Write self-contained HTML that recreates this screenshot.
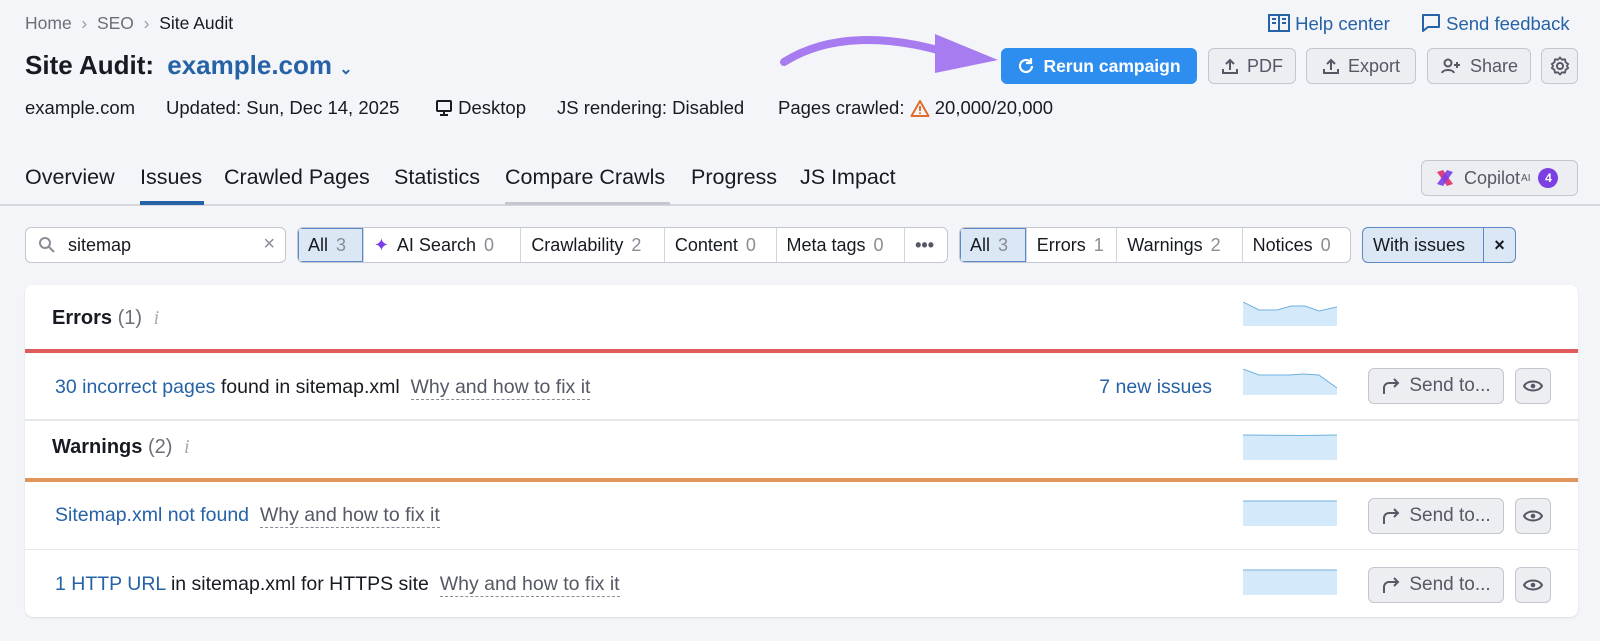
<!DOCTYPE html>
<html><head><meta charset="utf-8"><style>
*{box-sizing:border-box;margin:0;padding:0}
body{width:1600px;height:641px;background:#f4f5f9;font-family:"Liberation Sans",sans-serif;color:#171a22;position:relative;overflow:hidden;font-size:17px}
.a{position:absolute;white-space:nowrap}
.g{color:#6c6e79}
.blue{color:#2662a6}
.btn{position:absolute;border:1px solid #c4c7cf;background:#edeef2;border-radius:6px;color:#555865;display:flex;align-items:center;justify-content:center;gap:8px;font-size:18px}
.seg{position:absolute;top:227px;height:36px;display:flex;border:1px solid #c4c7cf;border-radius:6px;background:#fff;overflow:hidden}
.seg div{display:flex;align-items:center;padding:0 10px;border-left:1px solid #d3d5dc;font-size:18px;gap:8px;height:100%}
.seg div:first-child{border-left:none}
.seg .on{background:#dbe7f5;box-shadow:inset 0 0 0 1px #5b8ac4}
.n{color:#8a8c96}
.tab{position:absolute;top:165px;font-size:21.5px}
.m{position:absolute;top:97px;font-size:18.5px;white-space:nowrap}
.card{position:absolute;left:25px;top:285px;width:1553px;height:332px;background:#fff;border-radius:8px;box-shadow:0 1px 2px rgba(0,0,0,.1)}
.why{color:#555865;border-bottom:1.5px dashed #8a8c96;padding-bottom:1px}
.row{font-size:19.5px}
.sp{position:absolute;left:1218px;width:94px}
</style></head><body>
<div class="a g" style="left:25px;top:13px;font-size:17.5px">Home &nbsp;<span style="color:#9a9ca5">›</span>&nbsp; SEO &nbsp;<span style="color:#9a9ca5">›</span>&nbsp; <span style="color:#171a22">Site Audit</span></div>
<div class="a" style="left:25px;top:50px;font-size:26px;font-weight:bold">Site Audit: <span class="blue" style="margin-left:6px">example.com</span> <span class="blue" style="font-size:16px">⌄</span></div>
<div class="m" style="left:25px">example.com</div>
<div class="m" style="left:166px">Updated: Sun, Dec 14, 2025</div>
<div class="m" style="left:435px"><svg width="18" height="16" viewBox="0 0 18 16" style="vertical-align:-2px"><rect x="2" y="1" width="14" height="10" rx="1" fill="none" stroke="#171a22" stroke-width="2"/><path d="M9 11v3M5 15h8" stroke="#171a22" stroke-width="2"/></svg> Desktop</div>
<div class="m" style="left:557px">JS rendering: Disabled</div>
<div class="m" style="left:778px">Pages crawled: <svg width="20" height="18" viewBox="0 0 20 18" style="vertical-align:-3px"><path d="M10 2L18.5 17H1.5Z" fill="none" stroke="#e06d2c" stroke-width="2" stroke-linejoin="round"/><path d="M10 7v5M10 13.5v1.5" stroke="#e06d2c" stroke-width="2"/></svg> 20,000/20,000</div>
<div class="a blue" style="left:1268px;top:13px;font-size:18.5px"><svg width="22" height="20" viewBox="0 0 22 20" style="vertical-align:-3px"><rect x="1" y="2" width="20" height="16" fill="none" stroke="#2662a6" stroke-width="2"/><path d="M11 2v16M4 6h4M4 10h4M14 6h4M14 10h4" stroke="#2662a6" stroke-width="2"/></svg> Help center</div>
<div class="a blue" style="left:1421px;top:13px;font-size:18.5px"><svg width="20" height="20" viewBox="0 0 20 20" style="vertical-align:-3px"><path d="M2 2h16v12H7l-5 4Z" fill="none" stroke="#2662a6" stroke-width="2" stroke-linejoin="round"/></svg> Send feedback</div>
<svg class="a" style="left:770px;top:28px" width="240" height="52" viewBox="0 0 240 52"><path d="M14 34 C60 5 120 8 175 24" fill="none" stroke="#a77cf0" stroke-width="8" stroke-linecap="round"/><path d="M165 6 L228 32 L165 45 Z" fill="#a77cf0"/></svg>
<div class="btn" style="left:1001px;top:48px;width:196px;height:36px;background:#2d8ef0;border-color:#2d8ef0;color:#fff;font-weight:bold;font-size:17.5px"><svg width="18" height="18" viewBox="0 0 18 18"><path d="M15 9a6 6 0 1 1-2-4.5" fill="none" stroke="#fff" stroke-width="2.2"/><path d="M14 1v5h-5" fill="none" stroke="#fff" stroke-width="2.2"/></svg>Rerun campaign</div>
<div class="btn" style="left:1208px;top:48px;width:88px;height:36px"><svg width="18" height="18" viewBox="0 0 18 18"><path d="M9 13V3M5 7l4-4 4 4M2 12v4h14v-4" fill="none" stroke="#555865" stroke-width="2"/></svg>PDF</div>
<div class="btn" style="left:1306px;top:48px;width:110px;height:36px"><svg width="18" height="18" viewBox="0 0 18 18"><path d="M9 13V3M5 7l4-4 4 4M2 12v4h14v-4" fill="none" stroke="#555865" stroke-width="2"/></svg>Export</div>
<div class="btn" style="left:1427px;top:48px;width:104px;height:36px"><svg width="22" height="18" viewBox="0 0 22 18"><circle cx="8" cy="6" r="3.5" fill="none" stroke="#555865" stroke-width="2"/><path d="M2 16c1-4 11-4 12 0M17 5v6M14 8h6" fill="none" stroke="#555865" stroke-width="2"/></svg>Share</div>
<div class="btn" style="left:1541px;top:48px;width:37px;height:36px"><svg width="20" height="20" viewBox="0 0 20 20"><circle cx="10" cy="10" r="3" fill="none" stroke="#555865" stroke-width="2"/><path d="M10 1.5l2 2.2 3-.4.6 3 2.6 1.7-1.4 2 1.4 2-2.6 1.7-.6 3-3-.4-2 2.2-2-2.2-3 .4-.6-3L1.8 12l1.4-2-1.4-2 2.6-1.7.6-3 3 .4Z" fill="none" stroke="#555865" stroke-width="1.8" stroke-linejoin="round"/></svg></div>
<div class="tab" style="left:25px">Overview</div>
<div class="tab" style="left:140px">Issues</div>
<div class="tab" style="left:224px">Crawled Pages</div>
<div class="tab" style="left:394px">Statistics</div>
<div class="tab" style="left:505px">Compare Crawls</div>
<div class="tab" style="left:691px">Progress</div>
<div class="tab" style="left:800px">JS Impact</div>
<div class="a" style="left:0;top:204px;width:1600px;height:2px;background:#d6d8de"></div>
<div class="a" style="left:140px;top:201px;width:64px;height:4px;background:#2662a6"></div>
<div class="a" style="left:505px;top:202px;width:165px;height:3px;background:#c4c7cf"></div>
<div class="btn" style="left:1421px;top:160px;width:157px;height:36px;justify-content:flex-start;padding-left:12px;gap:8px"><svg width="22" height="22" viewBox="0 0 22 22"><path d="M3 5 L9 3 L19 17 L13 19Z" fill="#e0407a"/><path d="M19 5 L13 3 L3 17 L9 19Z" fill="#7b3fe4" opacity=".9"/></svg>Copilot<sup style="font-size:10px;margin-left:-7px">AI</sup><span style="background:#7b3fe4;color:#fff;border-radius:50%;width:20px;height:20px;font-size:12px;display:flex;align-items:center;justify-content:center;font-weight:bold">4</span></div>
<div class="a" style="left:25px;top:227px;width:261px;height:36px;background:#fff;border:1px solid #c4c7cf;border-radius:6px"><svg style="position:absolute;left:12px;top:8px" width="18" height="18" viewBox="0 0 18 18"><circle cx="7" cy="7" r="5" fill="none" stroke="#8a8c96" stroke-width="2"/><path d="M11 11l5 5" stroke="#8a8c96" stroke-width="2"/></svg><span style="position:absolute;left:42px;top:7px;font-size:18px">sitemap</span><span style="position:absolute;right:10px;top:5px;color:#8a8c96;font-size:20px">×</span></div>
<div class="seg" style="left:297px;width:651px">
<div class="on" style="width:65px">All <span class="n">3</span></div>
<div style="width:158px"><span style="color:#7b3fe4;font-size:18px">✦</span> AI Search <span class="n">0</span></div>
<div style="width:144px">Crawlability <span class="n">2</span></div>
<div style="width:112px">Content <span class="n">0</span></div>
<div style="width:129px">Meta tags <span class="n">0</span></div>
<div style="width:43px;color:#555865;font-weight:bold">•••</div>
</div>
<div class="seg" style="left:959px;width:392px">
<div class="on" style="width:66px">All <span class="n">3</span></div>
<div style="width:91px">Errors <span class="n">1</span></div>
<div style="width:126px">Warnings <span class="n">2</span></div>
<div style="width:109px">Notices <span class="n">0</span></div>
</div>
<div class="seg" style="left:1362px;width:154px;border-color:#5b8ac4;background:#dbe7f5">
<div style="width:122px">With issues</div>
<div style="width:32px;border-left-color:#5b8ac4;font-weight:bold;font-size:18px">×</div>
</div>
<div class="card">
<div class="a" style="left:27px;top:22px;font-size:20px;font-weight:bold">Errors <span class="g" style="font-weight:normal">(1)</span> <span style="color:#aaa;font-style:italic;font-weight:normal;font-family:'Liberation Serif',serif;margin-left:6px">i</span></div>
<svg class="sp" style="top:17px" height="24" viewBox="0 0 94 24"><path d="M0 0 L16 8 L34 8 L48 4 L62 4 L76 9 L94 5 V24 H0Z" fill="#d4eafa"/><path d="M0 0 L16 8 L34 8 L48 4 L62 4 L76 9 L94 5" fill="none" stroke="#6fb0de" stroke-width="1"/></svg>
<div class="a" style="left:0;top:64px;width:1553px;height:4px;background:#e05b5b"></div>
<div class="a row" style="left:30px;top:91px"><span class="blue">30 incorrect pages</span> found in sitemap.xml &nbsp;<span class="why">Why and how to fix it</span></div>
<div class="a blue row" style="right:366px;top:91px">7 new issues</div>
<svg class="sp" style="top:84px" height="26" viewBox="0 0 94 26"><path d="M0 0 L16 6 L46 6 L60 5 L76 6 L94 19 V26 H0Z" fill="#d4eafa"/><path d="M0 0 L16 6 L46 6 L60 5 L76 6 L94 19" fill="none" stroke="#6fb0de" stroke-width="1"/></svg>
<div class="btn" style="left:1343px;top:83px;width:136px;height:36px;font-size:19px"><svg width="20" height="18" viewBox="0 0 20 18"><path d="M3 17V11a5 5 0 0 1 5-5h9M13 2l4 4-4 4" fill="none" stroke="#555865" stroke-width="2"/></svg>Send to...</div>
<div class="btn" style="left:1490px;top:83px;width:36px;height:36px"><svg width="20" height="14" viewBox="0 0 20 14"><path d="M1 7C4 1 16 1 19 7C16 13 4 13 1 7Z" fill="none" stroke="#555865" stroke-width="2"/><circle cx="10" cy="7" r="2.3" fill="#555865"/></svg></div>
<div class="a" style="left:0;top:134px;width:1553px;height:2px;background:#e6e7eb"></div>
<div class="a" style="left:27px;top:151px;font-size:20px;font-weight:bold">Warnings <span class="g" style="font-weight:normal">(2)</span> <span style="color:#aaa;font-style:italic;font-weight:normal;font-family:'Liberation Serif',serif;margin-left:6px">i</span></div>
<svg class="sp" style="top:149px" height="26" viewBox="0 0 94 26"><path d="M0 1 L60 1.5 L94 1 V26 H0Z" fill="#d4eafa"/><path d="M0 1 L60 1.5 L94 1" fill="none" stroke="#6fb0de"/></svg>
<div class="a" style="left:0;top:193px;width:1553px;height:4px;background:#e0955a"></div>
<div class="a row" style="left:30px;top:219px"><span class="blue">Sitemap.xml not found</span> &nbsp;<span class="why">Why and how to fix it</span></div>
<svg class="sp" style="top:215px" height="26" viewBox="0 0 94 26"><path d="M0 1 H94 V26 H0Z" fill="#d4eafa"/><path d="M0 1 H94" stroke="#6fb0de"/></svg>
<div class="btn" style="left:1343px;top:213px;width:136px;height:36px;font-size:19px"><svg width="20" height="18" viewBox="0 0 20 18"><path d="M3 17V11a5 5 0 0 1 5-5h9M13 2l4 4-4 4" fill="none" stroke="#555865" stroke-width="2"/></svg>Send to...</div>
<div class="btn" style="left:1490px;top:213px;width:36px;height:36px"><svg width="20" height="14" viewBox="0 0 20 14"><path d="M1 7C4 1 16 1 19 7C16 13 4 13 1 7Z" fill="none" stroke="#555865" stroke-width="2"/><circle cx="10" cy="7" r="2.3" fill="#555865"/></svg></div>
<div class="a" style="left:0;top:264px;width:1553px;height:1px;background:#e6e7eb"></div>
<div class="a row" style="left:30px;top:288px"><span class="blue">1 HTTP URL</span> in sitemap.xml for HTTPS site &nbsp;<span class="why">Why and how to fix it</span></div>
<svg class="sp" style="top:284px" height="26" viewBox="0 0 94 26"><path d="M0 1 H94 V26 H0Z" fill="#d4eafa"/><path d="M0 1 H94" stroke="#6fb0de"/></svg>
<div class="btn" style="left:1343px;top:282px;width:136px;height:36px;font-size:19px"><svg width="20" height="18" viewBox="0 0 20 18"><path d="M3 17V11a5 5 0 0 1 5-5h9M13 2l4 4-4 4" fill="none" stroke="#555865" stroke-width="2"/></svg>Send to...</div>
<div class="btn" style="left:1490px;top:282px;width:36px;height:36px"><svg width="20" height="14" viewBox="0 0 20 14"><path d="M1 7C4 1 16 1 19 7C16 13 4 13 1 7Z" fill="none" stroke="#555865" stroke-width="2"/><circle cx="10" cy="7" r="2.3" fill="#555865"/></svg></div>
</div>
</body></html>
